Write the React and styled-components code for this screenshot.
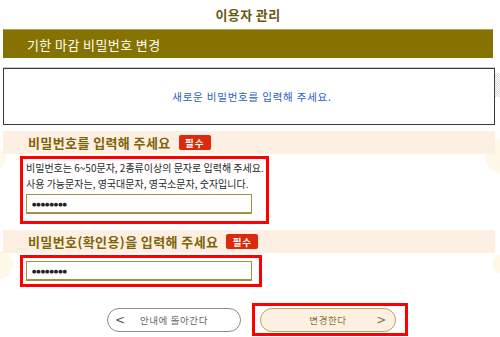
import React from "react";
import styled, { createGlobalStyle } from "styled-components";

const Global = createGlobalStyle`
  html, body { margin: 0; padding: 0; background: #fff; }
  body { font-family: "Noto Sans CJK KR", "Noto Sans", sans-serif; }
  * { box-sizing: border-box; }
`;

const Page = styled.div`
  position: relative;
  width: 500px;
  height: 337px;
  overflow: hidden;
  padding: 0 0 0 3px;
`;

const Blob = styled.div`
  position: absolute;
  border-radius: 50%;
  background: #fff8e6;
  z-index: 0;
`;

const Checker = styled.div`
  position: absolute;
  right: 0;
  top: 73px;
  width: 5px;
  height: 24px;
  background-image: repeating-conic-gradient(#d8d8d8 0 25%, #fff 0 50%);
  background-size: 2px 2px;
`;

const Content = styled.div`
  position: relative;
  z-index: 1;
  width: 492px;
  display: flex;
  flex-direction: column;
`;

const Title = styled.h1`
  margin: 0;
  height: 29px;
  display: flex;
  align-items: center;
  justify-content: center;
  font-size: 13px;
  font-weight: 700;
  color: #6a5810;
  letter-spacing: 0.4px;
  padding-right: 2px;
`;

const Bar = styled.div`
  height: 29px;
  width: 490px;
  background: #857200;
  border-top: 1px solid #b3a55a;
  color: #fff;
  font-size: 13px;
  display: flex;
  align-items: center;
  padding-left: 24px;
  letter-spacing: 0.4px;
`;

const Notice = styled.div`
  margin-top: 10px;
  height: 57px;
  border: 1px solid #3a3a3a;
  box-shadow: 0 -1px 0 #cfcfcf;
  display: flex;
  align-items: center;
  justify-content: center;
  color: #1f5fbf;
  font-size: 10.5px;
  letter-spacing: 0.8px;
  padding-left: 6px;
`;

const SectionHead = styled.div`
  margin-top: ${(p) => p.$mt}px;
  height: 23px;
  background: #fdf0e3;
  display: flex;
  align-items: center;
  padding-left: 25px;
  gap: 8px;
`;

const SectionTitle = styled.span`
  font-size: 13px;
  font-weight: 700;
  color: #7d6408;
  letter-spacing: 0.4px;
`;

const Badge = styled.span`
  display: inline-flex;
  align-items: center;
  justify-content: center;
  width: 32px;
  height: 15px;
  background: #dd2a0c;
  border-radius: 2px;
  color: #fff;
  font-size: 9.5px;
  font-weight: 700;
  letter-spacing: 1px;
`;

const Highlight = styled.div`
  margin-top: 2px;
  margin-left: 17px;
  width: ${(p) => p.$w}px;
  border: 3px solid #ff0000;
  padding: ${(p) => p.$pad};
  display: flex;
  flex-direction: column;
`;

const Hint = styled.p`
  margin: 0;
  font-size: 10px;
  line-height: 16px;
  color: #2a2a2a;
  letter-spacing: 0;
  white-space: nowrap;
`;

const Input = styled.div`
  margin-top: ${(p) => p.$mt || 0}px;
  width: 226px;
  height: 20px;
  border: 1px solid #a3923f;
  border-bottom-width: 2px;
  display: flex;
  align-items: center;
  padding-left: 5px;
  font-family: "DejaVu Sans", sans-serif;
  font-size: 5px;
  font-weight: 700;
  letter-spacing: 0;
  color: #222;
`;

const Buttons = styled.div`
  margin-top: 16px;
  padding-left: 104px;
  display: flex;
  align-items: center;
  gap: 11px;
`;

const Pill = styled.div`
  width: ${(p) => p.$w}px;
  height: 24px;
  border-radius: 12px;
  border: 1px solid ${(p) => (p.$primary ? "#b5a666" : "#8a8a8a")};
  background: ${(p) => (p.$primary ? "#fdf0e2" : "#fff")};
  color: ${(p) => (p.$primary ? "#85743a" : "#666")};
  display: flex;
  align-items: center;
  position: relative;
  font-size: 9.5px;
  letter-spacing: 0.6px;
  justify-content: center;
`;

const Arrow = styled.span`
  position: absolute;
  ${(p) => (p.$right ? "right: 8px;" : "left: 7px;")}
  top: 50%;
  transform: translateY(-50%);
  font-family: "DejaVu Sans", sans-serif;
  font-size: 12px;
  color: ${(p) => (p.$right ? "#85743a" : "#555")};
`;

const RedFrame = styled.div`
  border: 3px solid #ff0000;
  padding: 2px 9px 1px 5px;
  display: flex;
`;

export default function App() {
  return (
    <>
      <Global />
      <Page>
        <Blob style={{ left: -22, top: 148, width: 28, height: 22 }} />
        <Blob style={{ left: -24, top: 250, width: 37, height: 30 }} />
        <Blob style={{ left: 485, top: 138, width: 40, height: 36 }} />
        <Blob style={{ left: 493, top: 254, width: 20, height: 20 }} />
        <Checker />
        <Content>
          <Title>이용자 관리</Title>
          <Bar>기한 마감 비밀번호 변경</Bar>
          <Notice>새로운 비밀번호를 입력해 주세요.</Notice>

          <SectionHead $mt={6}>
            <SectionTitle>비밀번호를 입력해 주세요</SectionTitle>
            <Badge>필수</Badge>
          </SectionHead>
          <Highlight $w={249} $pad="1px 3px 7px 3px">
            <Hint>비밀번호는 6~50문자, 2종류이상의 문자로 입력해 주세요.</Hint>
            <Hint>사용 가능문자는, 영국대문자, 영국소문자, 숫자입니다.</Hint>
            <Input $mt={2}>●●●●●●●●</Input>
          </Highlight>

          <SectionHead $mt={6}>
            <SectionTitle>비밀번호(확인용)을 입력해 주세요</SectionTitle>
            <Badge>필수</Badge>
          </SectionHead>
          <Highlight $w={242} $pad="3px 3px 3px 3px">
            <Input>●●●●●●●●</Input>
          </Highlight>

          <Buttons>
            <Pill $w={134}>
              <Arrow>&lt;</Arrow>
              안내에 돌아간다
            </Pill>
            <RedFrame>
              <Pill $w={136} $primary>
                변경한다
                <Arrow $right>&gt;</Arrow>
              </Pill>
            </RedFrame>
          </Buttons>
        </Content>
      </Page>
    </>
  );
}
